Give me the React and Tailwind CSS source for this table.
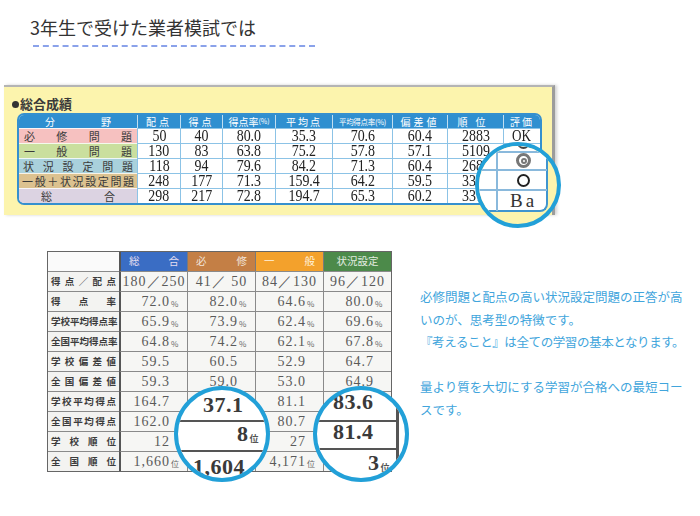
import React from "react";

const topRows = [
  { label: ["必", "修", "問", "題"], bg: "bg-[#f6c1c0]", pad: "px-[5px]", vals: ["50", "40", "80.0", "35.3", "70.6", "60.4", "2883"], ev: "OK" },
  { label: ["一", "般", "問", "題"], bg: "bg-[#cadf9e]", pad: "px-[5px]", vals: ["130", "83", "63.8", "75.2", "57.8", "57.1", "5109"], ev: "" },
  { label: ["状", "況", "設", "定", "問", "題"], bg: "bg-[#a9d1dc]", pad: "px-[4px]", vals: ["118", "94", "79.6", "84.2", "71.3", "60.4", "2683"], ev: "" },
  { label: ["一", "般", "＋", "状", "況", "設", "定", "問", "題"], bg: "bg-[#dcc290]", pad: "px-[3px]", vals: ["248", "177", "71.3", "159.4", "64.2", "59.5", "3383"], ev: "" },
  { label: ["総", "合"], bg: "bg-[#dcd3e2]", pad: "px-[22px]", vals: ["298", "217", "72.8", "194.7", "65.3", "60.2", "3373"], ev: "" },
];

const bottomRows = [
  { label: ["得", "点", "／", "配", "点"], center: true, vals: ["180／250", "41／ 50", "84／130", "96／120"] },
  { label: ["得", "点", "率"], suf: "%", vals: ["72.0", "82.0", "64.6", "80.0"] },
  { label: ["学", "校", "平", "均", "得", "点", "率"], suf: "%", vals: ["65.9", "73.9", "62.4", "69.6"] },
  { label: ["全", "国", "平", "均", "得", "点", "率"], suf: "%", vals: ["64.8", "74.2", "62.1", "67.8"] },
  { label: ["学", "校", "偏", "差", "値"], vals: ["59.5", "60.5", "52.9", "64.7"] },
  { label: ["全", "国", "偏", "差", "値"], vals: ["59.3", "59.0", "53.0", "64.9"] },
  { label: ["学", "校", "平", "均", "得", "点"], vals: ["164.7", "", "81.1", ""] },
  { label: ["全", "国", "平", "均", "得", "点"], vals: ["162.0", "", "80.7", ""] },
  { label: ["学", "校", "順", "位"], vals: ["12", "", "27", ""] },
  { label: ["全", "国", "順", "位"], suf: "位", vals: ["1,660", "", "4,171", ""] },
];

function TopPanel() {
  return (
    <div className="relative ml-[4px] mt-[38px] h-[130px] w-[551px] border-t-2 border-r-[3px] border-t-[#b4b4b4] border-r-[#9c9c9c] bg-[#fcf4ad] shadow-[2px_0_3px_rgba(0,0,0,0.18)]">
      <div className="ml-[8px] pt-[9px] flex items-center h-[25px] text-[13px] leading-[16px] font-bold text-[#3a3a3a]">
        <span className="mr-[1px] inline-block h-[7px] w-[7px] rounded-full bg-[#333]" />
        <span>総合成績</span>
      </div>
      <div className="ml-[13px] mt-[1px] grid w-[525px] grid-cols-[118px_43px_42px_53px_57px_60px_55px_56px_37px] grid-rows-[13px_repeat(5,15px)] overflow-hidden rounded-[7px] border-2 border-[#3590cf] bg-white">
        <div className="flex items-center justify-between bg-[#2f8fd0] px-[26px] text-[10px] leading-none text-white">
          <span>分</span>
          <span>野</span>
        </div>
        <div className="flex items-center justify-center border-l border-white/70 bg-[#2f8fd0] text-[10px] leading-none tracking-[3px] text-white">配点</div>
        <div className="flex items-center justify-center border-l border-white/70 bg-[#2f8fd0] text-[10px] leading-none tracking-[3px] text-white">得点</div>
        <div className="flex items-center justify-center border-l border-white/70 bg-[#2f8fd0] text-[10px] leading-none text-white">
          得点率<span className="text-[7px]">(%)</span>
        </div>
        <div className="flex items-center justify-center border-l border-white/70 bg-[#2f8fd0] text-[10px] leading-none tracking-[2px] text-white">平均点</div>
        <div className="flex items-center justify-center border-l border-white/70 bg-[#2f8fd0] text-[7.5px] leading-none tracking-[-0.3px] text-white">平均得点率(%)</div>
        <div className="flex items-center justify-center border-l border-white/70 bg-[#2f8fd0] text-[10px] leading-none tracking-[3px] text-white">偏差値</div>
        <div className="flex items-center justify-center border-l border-white/70 bg-[#2f8fd0] text-[10px] leading-none tracking-[8px] text-white">順位</div>
        <div className="flex items-center justify-center border-l border-white/70 bg-[#2f8fd0] text-[10px] leading-none tracking-[2px] text-white">評価</div>
        {topRows.map((r, i) => (
          <React.Fragment key={i}>
            <div className={`flex items-center justify-between border-t border-white/80 text-[11px] leading-none text-[#3a3a3a] ${r.bg} ${r.pad}`}>
              {r.label.map((c, j) => (
                <span key={j}>{c}</span>
              ))}
            </div>
            {r.vals.map((v, j) => (
              <div key={j} className="flex items-center justify-center border-t border-l border-[#8cc3e6]">
                <span className="inline-block scale-x-[0.82] font-['Liberation_Serif',serif] text-[17px] leading-[14px] text-[#222]">{v}</span>
              </div>
            ))}
            <div className="flex items-center justify-center border-t border-l border-[#8cc3e6]">
              <span className="inline-block scale-x-[0.82] font-['Liberation_Serif',serif] text-[16px] leading-[14px] text-[#222]">{r.ev}</span>
            </div>
          </React.Fragment>
        ))}
      </div>

      <div className="absolute left-[471px] top-[55px] h-[86px] w-[86px] overflow-hidden rounded-full border-4 border-[#22a0d8] bg-[#fcf4ad]">
        <div className="absolute left-[-6px] top-0 h-[66px] w-[75px] rounded-br-[8px] border-r-2 border-b-2 border-[#3f95cf] bg-white" />
        <div className="absolute left-[17px] top-0 h-[65px] w-[1.5px] bg-[#8ab9dc]" />
        <div className="absolute left-[-6px] top-[5px] h-[1.5px] w-[74px] bg-[#8ab9dc]" />
        <div className="absolute left-[-6px] top-[23px] h-[1.5px] w-[74px] bg-[#8ab9dc]" />
        <div className="absolute left-[-6px] top-[43px] h-[1.5px] w-[74px] bg-[#8ab9dc]" />
        <div className="absolute left-[38px] top-[-10px] h-[13px] w-[13px] rounded-full border-[2.5px] border-[#444]" />
        <div className="absolute left-[37px] top-[7px] flex h-[15px] w-[15px] items-center justify-center rounded-full border-[3px] border-[#777]">
          <div className="h-[6px] w-[6px] rounded-full border-[2px] border-[#777]" />
        </div>
        <div className="absolute left-[38px] top-[28px] h-[13px] w-[13px] rounded-full border-[2.5px] border-[#222]" />
        <div className="absolute left-[31px] top-[45px] font-['Liberation_Serif',serif] text-[19px] leading-none tracking-[3px] text-[#333]">Ba</div>
      </div>
    </div>
  );
}

function Num({ children, className }) {
  return (
    <span className={`font-['Liberation_Serif',serif] leading-none ${className}`}>{children}</span>
  );
}

function Big({ children }) {
  return <Num className="text-[22px] font-bold tracking-[0.5px] text-[#3a3a3a]">{children}</Num>;
}

function BottomTable() {
  const head = "flex items-center border-l border-[#7a7a7a] text-[10.5px] leading-none";
  return (
    <div className="relative ml-[47px] w-[345px] border border-[#666] bg-[#f6f6f4]">
      <div className="grid grid-cols-[71px_68px_68px_68px_68px] grid-rows-[19px_repeat(10,20px)]">
        <div className="bg-[#fafafa]" />
        <div className={`${head} justify-between border-l-2 border-l-[#555] bg-[#3a6dc4] px-[8px] text-[#e4def0]`}>
          <span>総</span>
          <span>合</span>
        </div>
        <div className={`${head} justify-between bg-[#c47f45] px-[8px] text-[#f0e2d8]`}>
          <span>必</span>
          <span>修</span>
        </div>
        <div className={`${head} justify-between bg-[#f3a12c] px-[8px] text-[#fff2dc]`}>
          <span>一</span>
          <span>般</span>
        </div>
        <div className={`${head} justify-center bg-[#4c8a4a] text-[#e2ece0]`}>状況設定</div>
        {bottomRows.map((r, i) => (
          <React.Fragment key={i}>
            <div className="flex items-center justify-between border-t border-[#8a8a8a] bg-[#f3f3f1] px-[3px] text-[9.5px] font-bold leading-none text-[#3c3c3c]">
              {r.label.map((c, j) => (
                <span key={j}>{c}</span>
              ))}
            </div>
            {r.vals.map((v, j) => (
              <div
                key={j}
                className={`flex items-center border-t border-l border-[#8a8a8a] ${j === 0 ? "border-l-2 border-l-[#555]" : ""} ${r.center ? "justify-center" : "justify-end pr-[4px]"}`}
              >
                <Num className="text-[14px] tracking-[1px] text-[#5a5a5a]">{v}</Num>
                {!r.center && v !== "" && (
                  <span className="inline-block w-[13px] pl-[1px] pt-[4px] text-[8px] leading-none text-[#666]">{r.suf || ""}</span>
                )}
              </div>
            ))}
          </React.Fragment>
        ))}
      </div>

      <div className="absolute left-[126px] top-[134px] h-[96px] w-[96px] overflow-hidden rounded-full border-4 border-[#22a0d8] bg-white">
        <div className="absolute left-[25px] top-[3px]">
          <Big>37.1</Big>
        </div>
        <div className="absolute left-0 top-[30px] h-[2px] w-[96px] bg-[#555]" />
        <div className="absolute left-[59px] top-[33px] flex items-end">
          <Big>8</Big>
          <span className="mb-[2px] ml-[1px] text-[9px] font-bold leading-none text-[#555]">位</span>
        </div>
        <div className="absolute left-0 top-[60px] h-[2px] w-[96px] bg-[#555]" />
        <div className="absolute left-[15px] top-[65px]">
          <Big>1,604</Big>
        </div>
      </div>

      <div className="absolute left-[265px] top-[134px] h-[96px] w-[96px] overflow-hidden rounded-full border-4 border-[#22a0d8] bg-white">
        <div className="absolute left-[16px] top-[0px]">
          <Big>83.6</Big>
        </div>
        <div className="absolute left-0 top-[30px] h-[2px] w-[79px] bg-[#555]" />
        <div className="absolute left-[16px] top-[30px]">
          <Big>81.4</Big>
        </div>
        <div className="absolute left-0 top-[58px] h-[2px] w-[79px] bg-[#555]" />
        <div className="absolute left-[51px] top-[62px] flex items-end">
          <Big>3</Big>
          <span className="mb-[2px] ml-[1px] text-[9px] font-bold leading-none text-[#555]">位</span>
        </div>
        <div className="absolute left-[79px] top-0 h-[96px] w-[3px] bg-[#555]" />
      </div>
    </div>
  );
}

function RightText() {
  return (
    <div className="ml-[28px] mt-[35px] whitespace-nowrap text-[12.5px] leading-[22.5px] text-[#41a5dc]">
      必修問題と配点の高い状況設定問題の正答が高
      <br />
      いのが、思考型の特徴です。
      <br />
      <span className="tracking-[-0.4px]">『考えること』は全ての学習の基本となります。</span>
      <br />
      <br />
      量より質を大切にする学習が合格への最短コー
      <br />
      スです。
    </div>
  );
}

export default function App() {
  return (
    <div className="relative h-[516px] w-[700px] overflow-hidden bg-white font-['Noto_Sans_CJK_JP','Noto_Sans',sans-serif]">
      <div className="pl-[30px] pt-[15px] text-[18px] leading-[24px] text-[#333]">3年生で受けた業者模試では</div>
      <div className="ml-[33px] mt-[6px] h-[2px] w-[282px] border-t-2 border-dashed border-[#8aa2ea] blur-[0.6px]" />
      <TopPanel />
      <div className="mt-[36px] flex items-start">
        <BottomTable />
        <RightText />
      </div>
    </div>
  );
}
